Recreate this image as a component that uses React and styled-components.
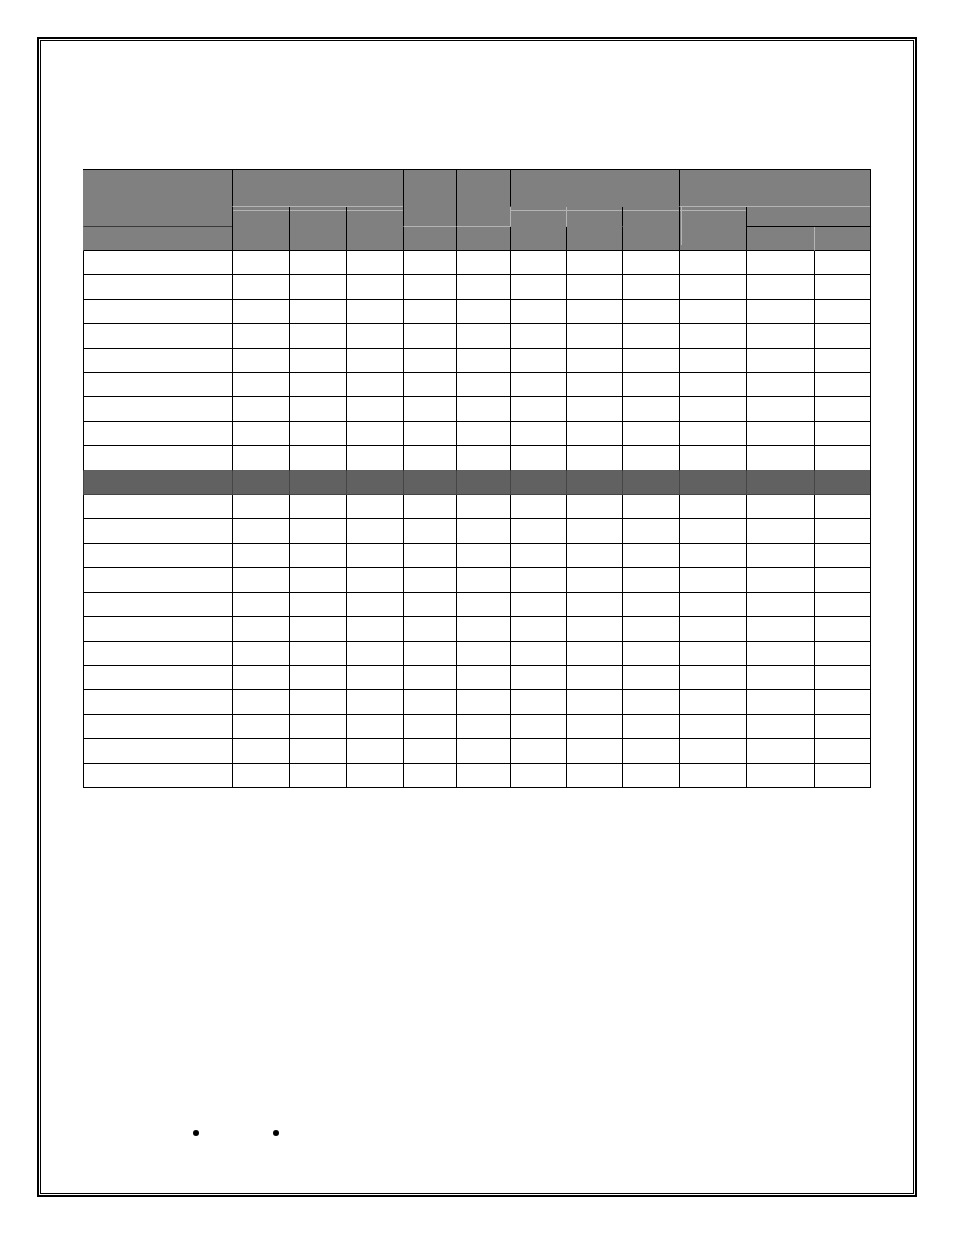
import styled, { createGlobalStyle, css } from 'styled-components';

const GREY = '#808080';
const LIGHT = '#b4b4b4';
const DARK = '#3a3a3a';

const widths = [149, 57, 57, 57, 53, 54, 56, 56, 57, 67, 68, 56];
const ROWS = 22;
const SHADED = 9;

const GlobalStyle = createGlobalStyle`
  body {
    margin: 0;
    background: #fff;
    font-family: "Liberation Serif", serif;
  }
`;

const Page = styled.div`
  padding: 37px 37px 38px;
`;

const Frame = styled.div`
  box-sizing: border-box;
  height: 1160px;
  border: 2px solid #000;
  padding: 1px;
`;

const Inner = styled.div`
  box-sizing: border-box;
  height: 100%;
  border: 1px solid #000;
  padding: 128px 43px 0 42px;
`;

const Grid = styled.table`
  table-layout: fixed;
  width: 788px;
  border-collapse: separate;
  border-spacing: 0;
  border-top: 1px solid #000;
  border-right: 1px solid #000;
`;

const Row = styled.tr`
  height: ${p => p.$h}px;
`;

const HeadCell = styled.th`
  padding: 0;
  background-color: ${GREY};
  border-left: 1px solid ${p => p.$left || '#000'};
  border-bottom: 1px solid ${p => p.$bottom || '#000'};
  background-repeat: no-repeat;
  ${p => p.$mark && !p.$tick && css`
    background-image: linear-gradient(${LIGHT}, ${LIGHT});
    background-size: 100% 1px;
    background-position: 0 3px;
  `}
  ${p => p.$tick && css`
    background-image: linear-gradient(${LIGHT}, ${LIGHT}), linear-gradient(${LIGHT}, ${LIGHT});
    background-size: 100% 1px, 1px 38px;
    background-position: 0 3px, 1px 0;
  `}
`;

const Cell = styled.td`
  padding: 0;
  background: ${p => (p.$dark ? '#616161' : '#fff')};
  border-left: 1px solid ${p => (p.$dark ? '#454545' : '#000')};
  border-bottom: 1px solid ${p => p.$edge};
`;

const Bullets = styled.div`
  display: flex;
  gap: 74px;
  margin-top: 342px;
  padding-left: 110px;
`;

const Dot = styled.span`
  width: 6px;
  height: 6px;
  border-radius: 50%;
  background: #000;
`;

function edgeFor(i) {
  if (i === SHADED - 1) return '#616161';
  if (i === SHADED) return '#444';
  return '#000';
}

export default function App() {
  return (
    <>
      <GlobalStyle />
      <Page>
        <Frame>
          <Inner>
            <Grid>
              <colgroup>
                {widths.map((w, i) => (
                  <col key={i} style={{ width: w }} />
                ))}
              </colgroup>
              <thead>
                <Row $h={37}>
                  <HeadCell rowSpan={2} $left={GREY} $bottom={DARK} />
                  <HeadCell colSpan={3} $bottom={LIGHT} />
                  <HeadCell rowSpan={2} $bottom={LIGHT} />
                  <HeadCell rowSpan={2} $bottom={LIGHT} />
                  <HeadCell colSpan={3} $bottom={GREY} />
                  <HeadCell colSpan={3} $bottom={LIGHT} />
                </Row>
                <Row $h={20}>
                  <HeadCell rowSpan={2} $mark />
                  <HeadCell rowSpan={2} $mark />
                  <HeadCell rowSpan={2} $mark />
                  <HeadCell $left={LIGHT} $bottom={GREY} $mark />
                  <HeadCell $left={LIGHT} $bottom={GREY} $mark />
                  <HeadCell $bottom={GREY} $mark />
                  <HeadCell rowSpan={2} $mark $tick />
                  <HeadCell colSpan={2} />
                </Row>
                <Row $h={24}>
                  <HeadCell $left={GREY} />
                  <HeadCell />
                  <HeadCell />
                  <HeadCell />
                  <HeadCell />
                  <HeadCell />
                  <HeadCell />
                  <HeadCell $left={LIGHT} />
                </Row>
              </thead>
              <tbody>
                {Array.from({ length: ROWS }, (_, i) => (
                  <Row key={i} $h={24.41}>
                    {widths.map((_, j) => (
                      <Cell key={j} $dark={i === SHADED} $edge={edgeFor(i)} />
                    ))}
                  </Row>
                ))}
              </tbody>
            </Grid>
            <Bullets>
              <Dot />
              <Dot />
            </Bullets>
          </Inner>
        </Frame>
      </Page>
    </>
  );
}
